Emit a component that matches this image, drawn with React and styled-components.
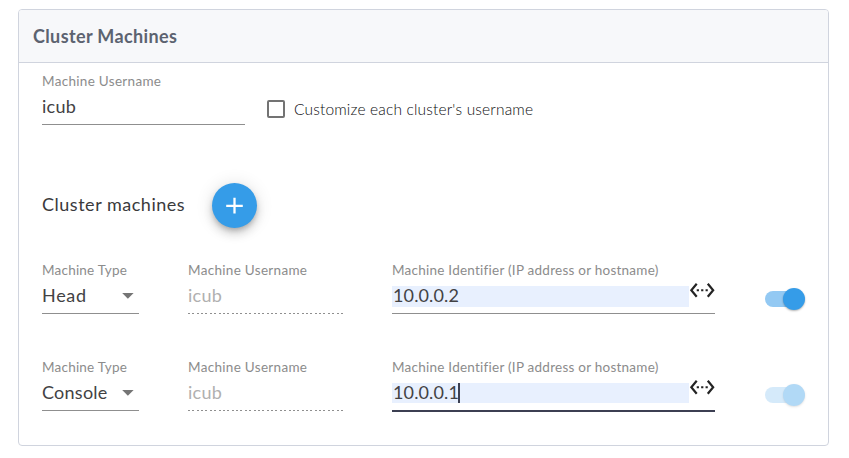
import React from 'react';
import styled, { createGlobalStyle } from 'styled-components';

const GlobalStyle = createGlobalStyle`
  * { box-sizing: border-box; }
  body {
    margin: 0;
    background: #fff;
    color: #3a3a3c;
    font-family: Lato, "Open Sans", sans-serif;
  }
`;

const Card = styled.section`
  width: 811px;
  height: 437px;
  margin: 9px 0 0 18px;
  border: 1px solid #d0d4de;
  border-radius: 4px;
  overflow: hidden;
`;

const CardHeader = styled.header`
  display: flex;
  align-items: center;
  height: 53px;
  padding: 0 14px;
  background: #f7f8fa;
  border-bottom: 1px solid #d0d4de;
`;

const CardTitle = styled.h1`
  margin: 0;
  padding-bottom: 1px;
  font-size: 18px;
  line-height: 24px;
  font-weight: 700;
  letter-spacing: 0.37px;
  color: #5c6370;
  white-space: nowrap;
`;

const CardBody = styled.div`
  padding: 8px 23px 0;
`;

const Row = styled.div`
  display: flex;
  align-items: flex-start;
  height: 54px;
  margin-top: ${(p) => p.$top || 0}px;
`;

const Field = styled.div`
  flex: none;
  width: ${(p) => p.$width}px;
  margin-right: ${(p) => p.$gap || 0}px;
`;

const FieldLabel = styled.div`
  height: 20px;
  line-height: 20px;
  font-size: 13.5px;
  letter-spacing: ${(p) => p.$tracking || 0.22}px;
  color: #8c8c8c;
  white-space: nowrap;
`;

const FieldControl = styled.div`
  display: flex;
  align-items: center;
  justify-content: space-between;
  height: 20px;
  margin: 6px 0 7px;
  padding-right: ${(p) => p.$inset || 0}px;
`;

const Value = styled.span`
  padding-bottom: 2px;
  font-size: 18px;
  line-height: 20px;
  letter-spacing: ${(p) => p.$tracking || 0.3}px;
  color: ${(p) => (p.$disabled ? '#b0b0b0' : '#424244')};
  white-space: nowrap;
`;

const AutofilledValue = styled.div`
  display: flex;
  align-items: center;
  width: 297px;
  height: ${(p) => (p.$active ? 20 : 21)}px;
  padding-left: 1px;
  background: #e8f0fe;
`;

const Caret = styled.span`
  width: 2px;
  height: 20px;
  margin-left: -1px;
  background: #3c4052;
`;

const Underline = styled.div`
  height: ${(p) => (p.$kind === 'active' ? 2 : 1)}px;
  background: ${(p) =>
    p.$kind === 'dotted'
      ? 'repeating-linear-gradient(to right, #8f8f8f 0 2px, transparent 2px 4.37px)'
      : p.$kind === 'active'
        ? '#3c3f52'
        : '#8f8f8f'};
`;

const Option = styled.label`
  display: flex;
  align-items: center;
  height: 20px;
  margin-top: 28px;
`;

const Box = styled.span`
  width: 18px;
  height: 18px;
  margin-right: 9px;
  border: 2px solid #737373;
  border-radius: 2px;
`;

const OptionText = styled.span`
  font-size: 15.5px;
  font-weight: 300;
  line-height: 20px;
  letter-spacing: 0.17px;
  color: #0c0c0e;
  white-space: nowrap;
`;

const AddRow = styled.div`
  display: flex;
  align-items: center;
  height: 45px;
  margin: 58px 0 32px;
`;

const AddTitle = styled.div`
  width: 170px;
  padding-bottom: 3px;
  font-size: 18px;
  line-height: 24px;
  letter-spacing: 0.52px;
  white-space: nowrap;
`;

const AddButton = styled.button`
  display: flex;
  align-items: center;
  justify-content: center;
  width: 45px;
  height: 45px;
  padding: 0;
  border: 0;
  border-radius: 50%;
  background: #359ce8;
  box-shadow: 0 3px 5px -1px rgba(0, 0, 0, 0.2), 0 6px 10px rgba(0, 0, 0, 0.14),
    0 1px 18px rgba(0, 0, 0, 0.12);
`;

const EthernetSvg = styled.svg`
  flex: none;
  width: 26.5px;
  height: 26.5px;
  margin: -12px 0 0 0;
  fill: #242424;
`;

const Toggle = styled.div`
  display: flex;
  align-items: center;
  justify-content: flex-end;
  width: 38px;
  height: 16px;
  margin-top: ${(p) => (p.$disabled ? 30 : 31)}px;
  border-radius: 8px;
  background: #93c9f3;
  opacity: ${(p) => (p.$disabled ? 0.38 : 1)};
`;

const Thumb = styled.span`
  flex: none;
  width: 22px;
  height: 22px;
  margin-right: -2px;
  border-radius: 50%;
  background: #359ce8;
  box-shadow: 0 1px 2px rgba(0, 0, 0, 0.3);
`;

function SelectArrow() {
  return (
    <svg width="12" height="6" viewBox="0 0 12 6">
      <path d="M0.2 0H11.6L5.9 5.7Z" fill="#757575" />
    </svg>
  );
}

function EthernetIcon() {
  return (
    <EthernetSvg viewBox="0 0 24 24">
      <path d="M7.77 6.76L6.23 5.48.82 12l5.41 6.52 1.54-1.28L3.42 12l4.35-5.24zM7 13h2v-2H7v2zm10-2h-2v2h2v-2zm-6 2h2v-2h-2v2zm6.77-7.52l-1.54 1.28L20.58 12l-4.35 5.24 1.54 1.28L23.18 12l-5.41-6.52z" />
    </EthernetSvg>
  );
}

function MachineRow({ top, type, typeTracking, address, active }) {
  return (
    <Row $top={top}>
      <Field $width={97} $gap={49}>
        <FieldLabel>Machine Type</FieldLabel>
        <FieldControl $inset={5}>
          <Value $tracking={typeTracking}>{type}</Value>
          <SelectArrow />
        </FieldControl>
        <Underline />
      </Field>
      <Field $width={155} $gap={49}>
        <FieldLabel $tracking={0.31}>Machine Username</FieldLabel>
        <FieldControl>
          <Value $disabled>icub</Value>
        </FieldControl>
        <Underline $kind="dotted" />
      </Field>
      <Field $width={323} $gap={50}>
        <FieldLabel $tracking={0.245}>Machine Identifier (IP address or hostname)</FieldLabel>
        <FieldControl>
          <AutofilledValue $active={active}>
            <Value $tracking={0.13}>{address}</Value>
            {active && <Caret />}
          </AutofilledValue>
          <EthernetIcon />
        </FieldControl>
        <Underline $kind={active ? 'active' : 'solid'} />
      </Field>
      <Toggle $disabled={active}>
        <Thumb />
      </Toggle>
    </Row>
  );
}

export default function App() {
  return (
    <>
      <GlobalStyle />
      <Card>
        <CardHeader>
          <CardTitle>Cluster Machines</CardTitle>
        </CardHeader>
        <CardBody>
          <Row>
            <Field $width={203} $gap={22}>
              <FieldLabel $tracking={0.31}>Machine Username</FieldLabel>
              <FieldControl>
                <Value>icub</Value>
              </FieldControl>
              <Underline />
            </Field>
            <Option>
              <Box />
              <OptionText>Customize each cluster's username</OptionText>
            </Option>
          </Row>
          <AddRow>
            <AddTitle>Cluster machines</AddTitle>
            <AddButton aria-label="Add machine">
              <svg width="17" height="17" viewBox="0 0 17 17">
                <path d="M0.2 8.8H16.8M8.5 0.8V16.6" stroke="#fff" strokeWidth="2.3" />
              </svg>
            </AddButton>
          </AddRow>
          <MachineRow type="Head" typeTracking={0.7} address="10.0.0.2" />
          <MachineRow top={43} type="Console" typeTracking={0.25} address="10.0.0.1" active />
        </CardBody>
      </Card>
    </>
  );
}
